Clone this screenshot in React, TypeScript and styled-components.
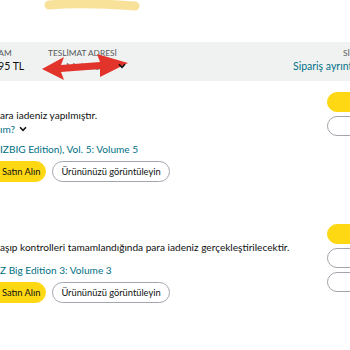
import React from "react";
import styled, { createGlobalStyle } from "styled-components";

const Global = createGlobalStyle`
  html, body { margin: 0; padding: 0; background: #fff; }
  body { font-family: Lato, "Noto Sans", Arial, sans-serif; color: #0f1111; }
`;

const Page = styled.div`
  width: 350px;
  height: 350px;
  overflow: hidden;
  background: #fff;
`;

const TopStrip = styled.div`
  height: 42px;
  position: relative;
`;

const Scribble = styled.svg`
  position: absolute;
  left: 42px;
  top: -3px;
`;

const Header = styled.div`
  display: flex;
  background: #f0f2f2;
  height: 39px;
  box-sizing: border-box;
  padding-top: 5px;
`;

const HeaderCol = styled.div<{ $width: number; $shift?: number }>`
  display: flex;
  flex-direction: column;
  flex: none;
  width: ${(p) => p.$width}px;
  margin-left: ${(p) => p.$shift ?? 0}px;
  position: relative;
`;

const RightCol = styled.div`
  margin-left: auto;
  width: 57px;
  flex: none;
  display: flex;
  flex-direction: column;
  overflow: hidden;
`;

const HeaderLabel = styled.div<{ $indent?: number }>`
  font-size: 8.3px;
  line-height: 12px;
  text-transform: uppercase;
  color: #565959;
  white-space: nowrap;
  padding-left: ${(p) => p.$indent ?? 0}px;
`;

const HeaderValue = styled.div<{ $indent?: number }>`
  font-size: 10.5px;
  line-height: 14px;
  color: #0f1111;
  white-space: nowrap;
  padding-left: ${(p) => p.$indent ?? 0}px;
`;

const HeaderLink = styled.a`
  font-size: 10.5px;
  line-height: 14px;
  color: #007185;
  white-space: nowrap;
  text-decoration: none;
`;

const BlurredName = styled.span`
  display: block;
  color: #6f7373;
  padding-left: 18px;
  font-size: 10px;
  width: 52px;
  overflow: hidden;
`;

const ArrowMark = styled.svg`
  position: absolute;
  left: -8px;
  top: 5px;
`;

const HeaderChevron = styled.span`
  position: absolute;
  left: 70px;
  top: 16px;
  display: flex;
`;

const Shipment = styled.div<{ $top: number }>`
  display: flex;
  margin-top: ${(p) => p.$top}px;
`;

const Info = styled.div`
  flex: 1;
  min-width: 0;
  padding-top: 16px;
  display: flex;
  flex-direction: column;
`;

const Status = styled.div`
  font-size: 10.1px;
  line-height: 14px;
  white-space: nowrap;
  color: #0f1111;
`;

const HelpLink = styled.div`
  font-size: 10.1px;
  line-height: 14px;
  color: #007185;
  display: flex;
  align-items: center;
  gap: 4px;
`;

const ProductLink = styled.a<{ $top: number }>`
  font-size: 10.1px;
  line-height: 14px;
  color: #007185;
  text-decoration: none;
  white-space: nowrap;
  margin-top: ${(p) => p.$top}px;
`;

const ButtonRow = styled.div`
  display: flex;
  gap: 6px;
  margin-top: 5px;
  margin-left: -12px;
`;

const PillButton = styled.button<{ $primary?: boolean }>`
  height: 21px;
  box-sizing: border-box;
  border-radius: 11px;
  font-family: inherit;
  font-size: 9.3px;
  color: #0f1111;
  padding: ${(p) => (p.$primary ? "0 5px 0 13px" : "0 8px")};
  border: 1px solid ${(p) => (p.$primary ? "#ffd814" : "#a2a6ac")};
  background: ${(p) => (p.$primary ? "#ffd814" : "#fff")};
  white-space: nowrap;
`;

const Actions = styled.div`
  width: 23px;
  flex: none;
  display: flex;
  flex-direction: column;
  gap: 4px;
  overflow: hidden;
`;

const ActionButton = styled.div<{ $primary?: boolean }>`
  width: 180px;
  flex: none;
  height: 20px;
  box-sizing: border-box;
  border-radius: 10px;
  border: 1px solid ${(p) => (p.$primary ? "#ffd814" : "#a2a6ac")};
  background: ${(p) => (p.$primary ? "#ffd814" : "#fff")};
`;

const Chevron = () => (
  <svg width="8" height="6" viewBox="0 0 8 6">
    <path d="M1 1.2 L4 4.3 L7 1.2" fill="none" stroke="#0f1111" strokeWidth="1.5" />
  </svg>
);

export default function App() {
  return (
    <>
      <Global />
      <Page>
        <TopStrip>
          <Scribble width="100" height="16" viewBox="0 0 100 16">
            <path
              d="M7 8 Q40 5 93 9"
              fill="none"
              stroke="#f7df8e"
              strokeWidth="9"
              strokeLinecap="round"
              opacity="0.9"
            />
          </Scribble>
        </TopStrip>
        <Header>
          <HeaderCol $width={56} $shift={-8}>
            <HeaderLabel $indent={2}>LAM</HeaderLabel>
            <HeaderValue>595 TL</HeaderValue>
          </HeaderCol>
          <HeaderCol $width={120}>
            <HeaderLabel>TESLİMAT ADRESİ</HeaderLabel>
            <HeaderValue>
              <BlurredName>Mehmet Y.</BlurredName>
            </HeaderValue>
            <ArrowMark width="90" height="28" viewBox="0 0 90 28">
              <polygon
                points="2,17 24,5 21,13 60,10 57,2 88,11 60,25 60,17 21,20 24,28"
                fill="#e3342b"
              />
            </ArrowMark>
            <HeaderChevron>
              <Chevron />
            </HeaderChevron>
          </HeaderCol>
          <RightCol>
            <HeaderLabel $indent={50}>SİPARİŞ NO</HeaderLabel>
            <HeaderLink>Sipariş ayrıntılarını görüntüle</HeaderLink>
          </RightCol>
        </Header>

        <Shipment $top={11}>
          <Info>
            <Status>ara iadeniz yapılmıştır.</Status>
            <HelpLink>
              ım? <Chevron />
            </HelpLink>
            <ProductLink $top={6}>IZBIG Edition), Vol. 5: Volume 5</ProductLink>
            <ButtonRow>
              <PillButton $primary>Satın Alın</PillButton>
              <PillButton>Ürününüzü görüntüleyin</PillButton>
            </ButtonRow>
          </Info>
          <Actions>
            <ActionButton $primary />
            <ActionButton />
          </Actions>
        </Shipment>

        <Shipment $top={42}>
          <Info>
            <Status>aşıp kontrolleri tamamlandığında para iadeniz gerçekleştirilecektir.</Status>
            <ProductLink $top={9}>Z Big Edition 3: Volume 3</ProductLink>
            <ButtonRow>
              <PillButton $primary>Satın Alın</PillButton>
              <PillButton>Ürününüzü görüntüleyin</PillButton>
            </ButtonRow>
          </Info>
          <Actions>
            <ActionButton $primary />
            <ActionButton />
            <ActionButton />
          </Actions>
        </Shipment>
      </Page>
    </>
  );
}
